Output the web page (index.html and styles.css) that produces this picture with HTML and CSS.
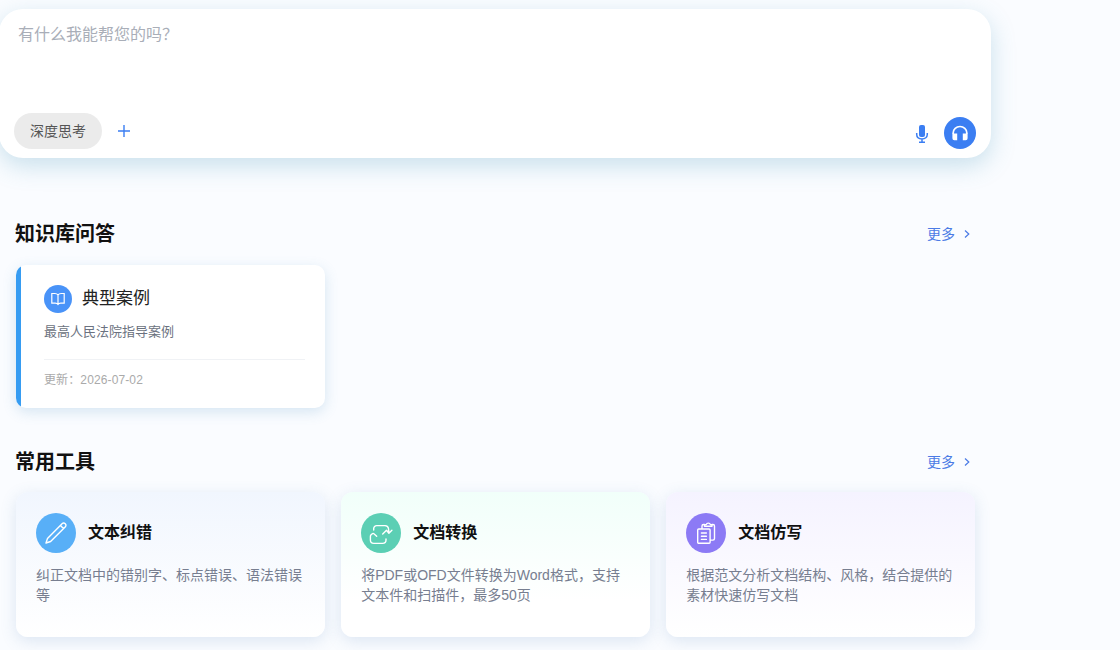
FILE: index.html
```html
<!DOCTYPE html>
<html lang="zh-CN">
<head>
<meta charset="utf-8">
<title>智能助手</title>
<link rel="stylesheet" href="styles.css">
</head>
<body>
<main class="page">
  <section class="composer">
    <div class="composer-input">有什么我能帮您的吗？</div>
    <div class="composer-bar">
      <div class="composer-left">
        <button class="think">深度思考</button>
        <svg class="plus" viewBox="0 0 12 12"><path d="M6 0v12M0 6h12"/></svg>
      </div>
      <div class="composer-right">
        <svg class="mic" viewBox="0 0 14 20"><rect x="4" y="1" width="6" height="12" rx="2" fill="currentColor"/><path d="M1.700 9v1.200c0 3 2.300 4.700 5.300 4.700s5.300-1.700 5.300-4.700V9M7 15v3M4 18.200h6" fill="none" stroke="currentColor" stroke-width="1.500"/></svg>
        <button class="voice"><svg viewBox="0 0 16 16"><path d="M1.200 9V7.800a6.800 6.300 0 0 1 13.600 0V9" fill="none" stroke="#fff" stroke-width="1.700"/><path d="M.4 8.500h4.800v6.700H2.300A1.900 1.900 0 0 1 .4 13.300zM10.800 8.500h4.800v4.800a1.900 1.900 0 0 1-1.900 1.900h-2.900z" fill="#fff"/></svg></button>
      </div>
    </div>
  </section>

  <section class="section">
    <header class="section-head">
      <h2>知识库问答</h2>
      <a class="more">更多<svg viewBox="0 0 6 8"><path d="M1 .5 4.800 4 1 7.500"/></svg></a>
    </header>
    <div class="grid">
      <article class="kb-card">
        <div class="kb-title">
          <span class="kb-icon"><svg viewBox="0 0 14 14"><path d="M7 3C6.300 1.900 5 1.500 3.800 1.500H.8v9.600h3.400c1.300 0 2.200.3 2.800 1.300.6-1 1.500-1.300 2.800-1.300h3.400V1.500h-3C9 1.500 7.700 1.900 7 3zM7 3v9.400"/></svg></span>
          <h3>典型案例</h3>
        </div>
        <p class="kb-desc">最高人民法院指导案例</p>
        <p class="kb-date">更新：2026-07-02</p>
      </article>
    </div>
  </section>

  <section class="section tools">
    <header class="section-head">
      <h2>常用工具</h2>
      <a class="more">更多<svg viewBox="0 0 6 8"><path d="M1 .5 4.800 4 1 7.500"/></svg></a>
    </header>
    <div class="grid">
      <article class="tool blue">
        <div class="tool-title">
          <span class="tool-icon"><svg viewBox="0 0 24 24"><path d="M2 22l1.500-4.600L18.300 2.600a1.900 1.900 0 0 1 2.700 0l.4.400a1.900 1.900 0 0 1 0 2.700L6.600 20.500zM16.400 4.500l3.100 3.100"/></svg></span>
          <h3>文本纠错</h3>
        </div>
        <p>纠正文档中的错别字、标点错误、语法错误等</p>
      </article>
      <article class="tool green">
        <div class="tool-title">
          <span class="tool-icon"><svg viewBox="0 0 24 24"><path d="M4.700 9V7.600a3 3 0 0 1 3-3h8.300a3.500 3.500 0 0 1 3.500 3.200l.4 4.400 3-3M19.900 12.200l-2.200-2.700M17.500 9.200l-3.800 3.700M7.700 15.200 5.200 12.900a1.600 1.600 0 0 0-2.200 0l-.9.900a2.600 2.600 0 0 0-.7 1.800V19a3.400 3.400 0 0 0 3.400 3.400h8.800a3.400 3.400 0 0 0 3.400-3.400v-1"/></svg></span>
          <h3>文档转换</h3>
        </div>
        <p>将PDF或OFD文件转换为Word格式，支持文本件和扫描件，最多50页</p>
      </article>
      <article class="tool purple">
        <div class="tool-title">
          <span class="tool-icon"><svg viewBox="0 0 24 24"><path d="M4.700 8h10.400a1 1 0 0 1 1 1v12.300a1 1 0 0 1-1 1H4.700a1 1 0 0 1-1-1V9a1 1 0 0 1 1-1zM8 7.500V5a1.500 1.500 0 0 1 1.500-1.500h1M18 3.500h1A1.500 1.500 0 0 1 20.500 5v12.600a1.500 1.500 0 0 1-1.500 1.500h-2.500M10.500 5.300V3.600h1.700c.6-2 3.600-2 4.200 0H18v1.700zM7.400 12h5M7.400 15.200h5M7.400 18.400h5"/></svg></span>
          <h3>文档仿写</h3>
        </div>
        <p>根据范文分析文档结构、风格，结合提供的素材快速仿写文档</p>
      </article>
    </div>
  </section>
</main>
</body>
</html>
```
FILE: styles.css
```css
* { box-sizing: border-box; }
body {
  margin: 0;
  height: 650px;
  overflow: hidden;
  background: #fafcff;
  font-family: "Liberation Sans", "Noto Sans CJK SC", sans-serif;
  color: #111;
}
h2, h3, p { margin: 0; }
button { border: 0; padding: 0; font: inherit; }
.page { width: 991px; padding-top: 9px; }

.composer {
  display: flex;
  flex-direction: column;
  justify-content: space-between;
  height: 148.5px;
  margin-left: -1px;
  padding: 14px 15px 8.5px 15px;
  border-radius: 24px;
  background: #fff;
  box-shadow: 0 8px 24px rgba(70, 150, 185, .27);
}
.composer-input { padding-left: 4px; font-size: 16px; line-height: 24px; color: #a9aeb8; }
.composer-bar, .composer-left, .composer-right { display: flex; align-items: center; }
.composer-bar { justify-content: space-between; }
.think {
  width: 88px;
  height: 36px;
  padding-bottom: 2px;
  border-radius: 18px;
  background: #ebebeb;
  color: #555;
  font-size: 14px;
}
.plus { width: 12px; height: 12px; margin-left: 16px; fill: none; stroke: #3b7ef2; stroke-width: 1.4; }
.composer-right { gap: 15px; margin-right: -.4px; padding-top: 4px; color: #3b7ef2; }
.mic { width: 14px; height: 20px; margin-top: 1px; }
.voice {
  display: grid;
  place-items: center;
  width: 32px;
  height: 32px;
  border-radius: 50%;
  background: #3b7ef2;
}
.voice svg { width: 16px; height: 16px; }

.section { padding: 61.5px 16px 0 15.5px; }
.section.tools { padding-top: 39px; }
.section-head {
  display: flex;
  align-items: center;
  justify-content: space-between;
  height: 30px;
  margin-left: -.5px;
  padding-right: 5px;
}
.section-head h2 { font-size: 20px; line-height: 30px; font-weight: 700; }
.more {
  display: flex;
  align-items: center;
  gap: 9px;
  padding-bottom: 1px;
  font-size: 14px;
  line-height: 20px;
  color: #4b7be5;
}
.more svg { width: 6px; height: 8px; fill: none; stroke: currentColor; stroke-width: 1.2; }
.grid { display: grid; grid-template-columns: repeat(3, 1fr); gap: 16px; margin-top: 15px; }

.kb-card {
  position: relative;
  overflow: hidden;
  height: 143px;
  margin-top: 1px;
  padding: 20px 20px 0 28.5px;
  border-radius: 10px;
  background: #fff;
  box-shadow: 0 4px 14px rgba(70, 140, 190, .2);
}
.kb-card::before {
  content: "";
  position: absolute;
  left: 0;
  top: 0;
  bottom: 0;
  width: 5px;
  background: #369cf2;
}
.kb-title { display: flex; align-items: center; gap: 10px; height: 28px; }
.kb-icon {
  display: grid;
  place-items: center;
  width: 28px;
  height: 28px;
  border-radius: 50%;
  background: #4993f8;
}
.kb-icon svg { width: 14px; height: 14px; fill: none; stroke: #fff; stroke-width: 1.2; }
.kb-title h3 { font-size: 17px; font-weight: 400; line-height: 26px; color: #222; }
.kb-desc { margin-top: 8px; padding-top: 1px; font-size: 13px; line-height: 20px; color: #6b7280; }
.kb-date {
  margin-top: 17px;
  padding-top: 10px;
  border-top: 1px solid #f0f2f5;
  font-size: 12px;
  line-height: 20px;
  letter-spacing: .12px;
  color: #aaa;
}

.tool {
  height: 144.5px;
  padding: 20.5px;
  border-radius: 12px;
  box-shadow: 0 4px 16px rgba(70, 120, 180, .17);
}
.blue { background: linear-gradient(#f1f6fe, #fff); }
.green { background: linear-gradient(#f1fffa, #fff 75%); }
.purple { background: linear-gradient(#f5f3ff, #fff); }
.tool-title { display: flex; align-items: center; gap: 12px; height: 40px; }
.tool-icon {
  display: grid;
  place-items: center;
  width: 40px;
  height: 40px;
  border-radius: 50%;
}
.blue .tool-icon { background: #58aff7; }
.green .tool-icon { background: #5bcfb4; }
.purple .tool-icon { background: #8c7af5; }
.tool-icon svg { width: 24px; height: 24px; fill: none; stroke: #fff; stroke-width: 1.4; stroke-linejoin: round; stroke-linecap: round; }
.tool h3 { padding-top: 1px; font-size: 16px; line-height: 24px; font-weight: 700; }
.tool p { margin-top: 12px; font-size: 14px; line-height: 20px; color: #777e90; }
```
